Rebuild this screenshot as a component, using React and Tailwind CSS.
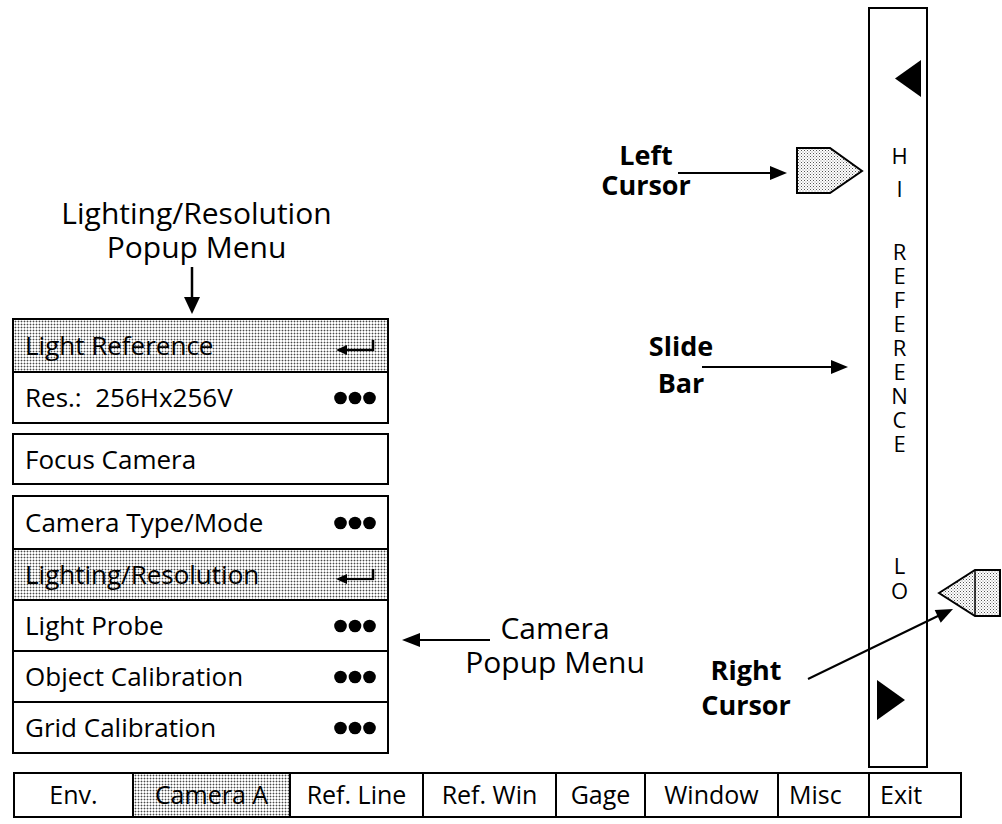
import React from "react";

const stipple =
  "bg-[image:radial-gradient(circle,#4a4a4a_0.8px,transparent_1.1px)] bg-[length:3px_3px]";

function Dots() {
  return (
    <svg width="42" height="14" viewBox="0 0 42 14">
      <circle cx="6.5" cy="7" r="6.3" fill="black" />
      <circle cx="21" cy="7" r="6.3" fill="black" />
      <circle cx="35.5" cy="7" r="6.3" fill="black" />
    </svg>
  );
}

function EnterMark() {
  return (
    <svg width="40" height="18" viewBox="0 0 40 18">
      <line x1="8" y1="13" x2="38" y2="13" stroke="black" strokeWidth="2.2" />
      <polygon points="0,13 11,8 11,18" fill="black" />
      <line x1="37" y1="3" x2="37" y2="14" stroke="black" strokeWidth="2.5" />
    </svg>
  );
}

function Row({ label, right, shaded, first }) {
  return (
    <div
      className={`flex h-[51px] items-center justify-between pl-[11px] pr-[11px] text-[26px] ${
        first ? "" : "border-t-2 border-black"
      } ${shaded ? stipple : ""}`}
    >
      <span className="whitespace-pre">{label}</span>
      {right === "dots" && <Dots />}
      {right === "enter" && <EnterMark />}
    </div>
  );
}

const tabs = [
  { label: "Env.", w: "w-[117px]", pad: "justify-center" },
  { label: "Camera A", w: "w-[157px]", pad: "justify-center", shaded: true },
  { label: "Ref. Line", w: "w-[133px]", pad: "justify-center" },
  { label: "Ref. Win", w: "w-[133px]", pad: "justify-center" },
  { label: "Gage", w: "w-[89px]", pad: "justify-center" },
  { label: "Window", w: "w-[133px]", pad: "justify-center" },
  { label: "Misc", w: "w-[91px]", pad: "pl-[10px]" },
  { label: "Exit", w: "w-[92px]", pad: "pl-[10px]" },
];

export default function App() {
  return (
    <div className="relative h-[824px] w-[1002px] overflow-hidden bg-white font-['Open_Sans',sans-serif] text-black">
      <div className="flex pt-[7px]">
        {/* left column: popup menus */}
        <div className="ml-[12px] flex w-[377px] flex-col pt-[189px]">
          <div className="whitespace-pre-line pr-[8px] text-center text-[30px] leading-[34px]">
            {"Lighting/Resolution\nPopup Menu"}
          </div>
          <svg width="377" height="54" className="block">
            <line x1="180" y1="3" x2="180" y2="36" stroke="black" strokeWidth="2.5" />
            <polygon points="180,50 172,33 188,33" fill="black" />
          </svg>

          <div className="border-2 border-black">
            <Row label="Light Reference" right="enter" shaded first />
            <Row label="Res.:  256Hx256V" right="dots" />
          </div>

          <div className="mt-[9px] border-2 border-black">
            <div className="flex h-[48px] items-center pl-[11px] text-[26px]">Focus Camera</div>
          </div>

          <div className="mt-[10px] border-2 border-black">
            <Row label="Camera Type/Mode" right="dots" first />
            <Row label="Lighting/Resolution" right="enter" shaded />
            <Row label="Light Probe" right="dots" />
            <Row label="Object Calibration" right="dots" />
            <Row label="Grid Calibration" right="dots" />
          </div>
        </div>

        {/* slide bar */}
        <div className="ml-[479px] flex h-[761px] w-[60px] flex-col border-2 border-black text-[22px]">
          <div className="flex justify-end pr-[5px] pt-[51px]">
            <svg width="26" height="37" viewBox="0 0 26 37">
              <polygon points="0,18.5 26,0 26,37" fill="black" />
            </svg>
          </div>
          <div className="flex flex-col items-center pl-[3px] text-center">
            <div className="mt-[42px] whitespace-pre-line leading-[33px]">{"H\nI"}</div>
            <div className="mt-[34px] whitespace-pre-line leading-[24px]">
              {"R\nE\nF\nE\nR\nE\nN\nC\nE"}
            </div>
            <div className="mt-[98px] whitespace-pre-line leading-[25px]">{"L\nO"}</div>
          </div>
          <div className="pl-[7px] pt-[77px]">
            <svg width="28" height="40" viewBox="0 0 28 40">
              <polygon points="0,0 28,20 0,40" fill="black" />
            </svg>
          </div>
        </div>
      </div>

      {/* bottom menu bar */}
      <div className="ml-[13px] mt-[4px] flex h-[46px] w-fit border-2 border-black text-[25px]">
        {tabs.map((t, i) => (
          <div
            key={t.label}
            className={`flex items-center ${t.w} ${t.pad} ${i > 0 ? "border-l-2 border-black" : ""} ${
              t.shaded ? stipple : ""
            }`}
          >
            {t.label}
          </div>
        ))}
      </div>

      {/* callout labels */}
      <div className="absolute left-[596px] top-[140px] w-[100px] whitespace-pre-line text-center text-[27px] font-bold leading-[30px]">
        {"Left\nCursor"}
      </div>
      <div className="absolute left-[631px] top-[327px] w-[100px] whitespace-pre-line text-center text-[27px] font-bold leading-[37px]">
        {"Slide\nBar"}
      </div>
      <div className="absolute left-[696px] top-[652px] w-[100px] whitespace-pre-line text-center text-[27px] font-bold leading-[35px]">
        {"Right\nCursor"}
      </div>
      <div className="absolute left-[455px] top-[611px] w-[200px] whitespace-pre-line text-center text-[30px] leading-[34px]">
        {"Camera\nPopup Menu"}
      </div>

      {/* callout arrows and cursors */}
      <svg className="pointer-events-none absolute left-0 top-0" width="1002" height="824">
        <defs>
          <pattern id="dots" width="3" height="3" patternUnits="userSpaceOnUse">
            <rect width="3" height="3" fill="white" />
            <rect width="1" height="1" fill="#555" />
            <rect x="1.5" y="1.5" width="1" height="1" fill="#888" />
          </pattern>
        </defs>

        <line x1="678" y1="173" x2="772" y2="173" stroke="black" strokeWidth="2" />
        <polygon points="787,173 770,166 770,180" fill="black" />
        <polygon
          points="797,148 830,148 862,171 830,193 797,193"
          fill="url(#dots)"
          stroke="black"
          strokeWidth="2"
        />

        <line x1="702" y1="367" x2="833" y2="367" stroke="black" strokeWidth="2" />
        <polygon points="848,367 831,360 831,374" fill="black" />

        <line x1="490" y1="640" x2="418" y2="640" stroke="black" strokeWidth="2" />
        <polygon points="402,640 420,633 420,647" fill="black" />

        <line x1="808" y1="679" x2="940" y2="615" stroke="black" strokeWidth="2" />
        <polygon points="953,609 940.7,622.7 934.7,610.1" fill="black" />
        <polygon
          points="939,593 975,570 1000,570 1000,616 975,616"
          fill="url(#dots)"
          stroke="black"
          strokeWidth="2"
        />
        <line x1="975" y1="570" x2="975" y2="616" stroke="black" strokeWidth="1.5" />
      </svg>
    </div>
  );
}
